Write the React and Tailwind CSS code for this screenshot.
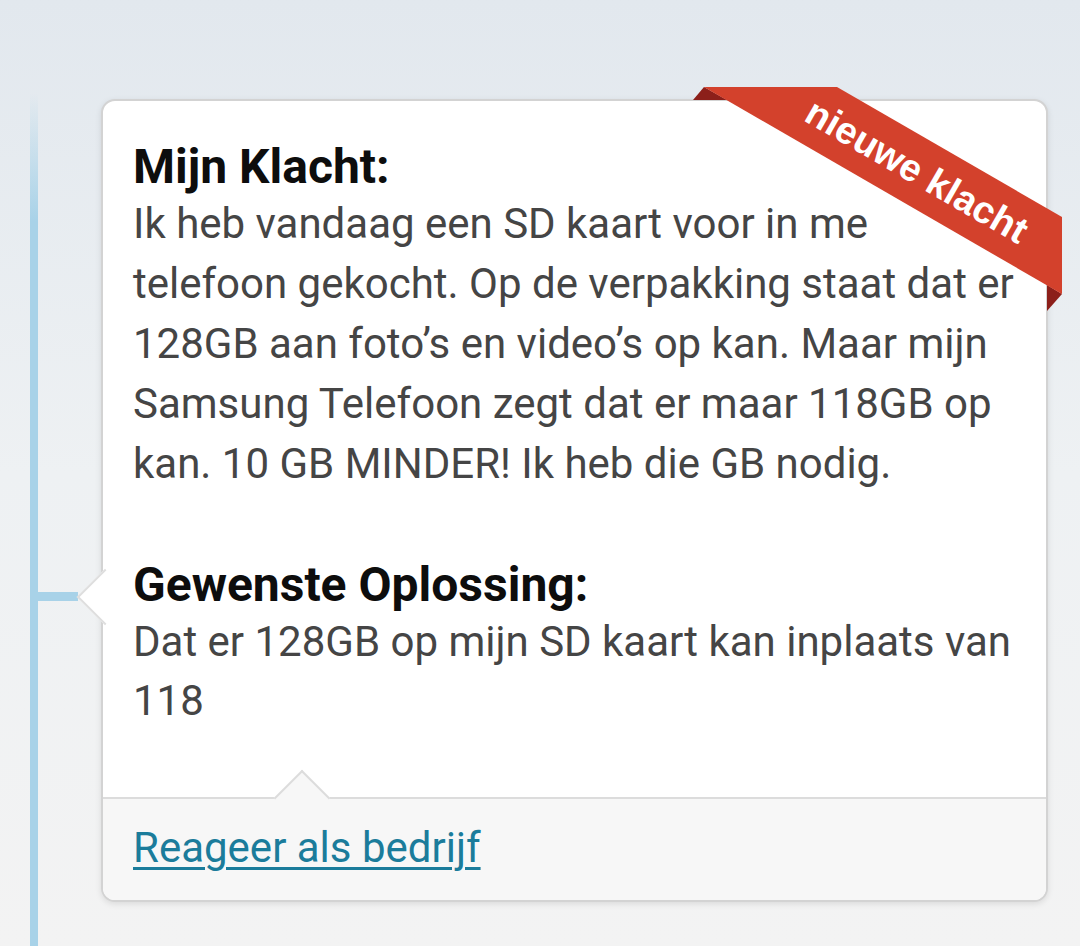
// App.jsx - complaint card with "nieuwe klacht" ribbon
const Ribbon = () => (
  <svg
    className="absolute left-[587px] top-[-17px] pointer-events-none"
    width="380"
    height="235"
    viewBox="0 0 380 235"
  >
    {/* folded ends behind the card */}
    <polygon points="3,16 14,3 37,16" fill="#8c1f1a" />
    <polygon points="357,201 372,210 357,227" fill="#8c1f1a" />
    {/* band */}
    <polygon points="14,3 147,3 372,133 372,210" fill="#d3412c" />
    <text
      x="227"
      y="100"
      transform="rotate(30 227 87)"
      textAnchor="middle"
      fill="#ffffff"
      fontFamily="'Liberation Sans', Arial, sans-serif"
      fontWeight="700"
      fontSize="38"
    >
      nieuwe klacht
    </text>
  </svg>
);

export default function App() {
  return (
    <div className="relative flex h-[946px] w-full overflow-hidden bg-gradient-to-b from-[#e2e8ee] via-[#eef1f3] to-[#f3f3f3] pt-[99px] font-['Roboto',sans-serif]">
      {/* Timeline */}
      <div className="relative w-[101px] shrink-0 -mt-[6px]">
        <div className="ml-[30px] h-full w-[8px] bg-gradient-to-b from-[#a8d2e8]/0 via-[#a8d2e8] via-[15%] to-[#a8d2e8]" />
        <div className="absolute left-[38px] top-[499px] h-[9px] w-[40px] bg-[#a8d2e8]" />
      </div>

      {/* Card */}
      <div className="relative h-[803px] w-[947px] shrink-0 rounded-[14px] border-2 border-[#d3d3d3] bg-white shadow-[0_2px_6px_rgba(0,0,0,0.10)] flex flex-col">
        {/* left pointer */}
        <div className="absolute left-[-18px] top-[476px] h-[40px] w-[40px] rotate-45 border-b-2 border-l-2 border-[#dedede] bg-white" />

        <Ribbon />

        <div className="flex-1 px-[30px] pt-[39px]">
          <h2 className="text-[48px] font-bold leading-[54px] text-[#0d0d0d]">Mijn Klacht:</h2>
          <p className="whitespace-nowrap text-[42px] leading-[60px] text-[#454545]">
            Ik heb vandaag een SD kaart voor in me
            <br />
            telefoon gekocht. Op de verpakking staat dat er
            <br />
            128GB aan foto’s en video’s op kan. Maar mijn
            <br />
            Samsung Telefoon zegt dat er maar 118GB op
            <br />
            kan. 10 GB MINDER! Ik heb die GB nodig.
          </p>

          <h2 className="mt-[64px] text-[48px] font-bold leading-[54px] text-[#0d0d0d]">Gewenste Oplossing:</h2>
          <p className="whitespace-nowrap text-[42px] leading-[59px] text-[#454545]">
            Dat er 128GB op mijn SD kaart kan inplaats van
            <br />
            118
          </p>
        </div>

        {/* Footer */}
        <div className="relative h-[103px] rounded-b-[12px] border-t-2 border-[#dcdcdc] bg-[#f7f7f7] px-[30px] py-[19px]">
          <div className="absolute left-[179px] top-[-21px] h-[40px] w-[40px] rotate-45 border-l-2 border-t-2 border-[#dcdcdc] bg-[#f7f7f7]" />
          <a
            href="#"
            className="relative text-[42px] leading-[60px] text-[#1b7c9b] underline decoration-[3px] underline-offset-[5px]"
          >
            Reageer als bedrijf
          </a>
        </div>
      </div>
    </div>
  );
}
